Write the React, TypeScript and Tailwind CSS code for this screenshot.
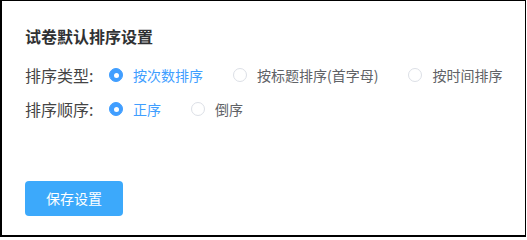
const typeOptions = ['按次数排序', '按标题排序(首字母)', '按时间排序'];
const orderOptions = ['正序', '倒序'];

function Radio({ label, checked }: { label: string; checked?: boolean }) {
  return (
    <label className="flex items-center shrink-0 mr-[30px] cursor-pointer whitespace-nowrap">
      {checked ? (
        <span className="w-[14px] h-[14px] rounded-full bg-[#409eff] border border-[#409eff] flex items-center justify-center">
          <span className="w-[5px] h-[5px] rounded-full bg-white" />
        </span>
      ) : (
        <span className="w-[14px] h-[14px] rounded-full bg-white border border-[#dcdfe6]" />
      )}
      <span className={`ml-[10px] text-[14px] ${checked ? 'text-[#409eff]' : 'text-[#606266]'}`}>{label}</span>
    </label>
  );
}

function Row({ label, options }: { label: string; options: string[] }) {
  return (
    <div className="flex items-center h-[20px] whitespace-nowrap">
      <span className="w-[84px] shrink-0 text-[16px] text-[#444]">{label}</span>
      {options.map((o, i) => (
        <Radio key={o} label={o} checked={i === 0} />
      ))}
    </div>
  );
}

export default function App() {
  return (
    <div
      className="w-[526px] h-[237px] bg-white border-t border-r border-l-2 border-b-2 border-black flex flex-col pl-[23px] pt-[25px]"
      style={{ fontFamily: '"Noto Sans CJK SC", "Liberation Sans", sans-serif' }}
    >
      <h3 className="text-[16px] font-bold text-[#303133] leading-[20px]">试卷默认排序设置</h3>
      <div className="mt-[19px] flex flex-col gap-[14px]">
        <Row label="排序类型:" options={typeOptions} />
        <Row label="排序顺序:" options={orderOptions} />
      </div>
      <div className="mt-[62px]">
        <button className="w-[98px] h-[35px] rounded-[4px] bg-[#3ca9fb] text-white text-[14px]">保存设置</button>
      </div>
    </div>
  );
}
